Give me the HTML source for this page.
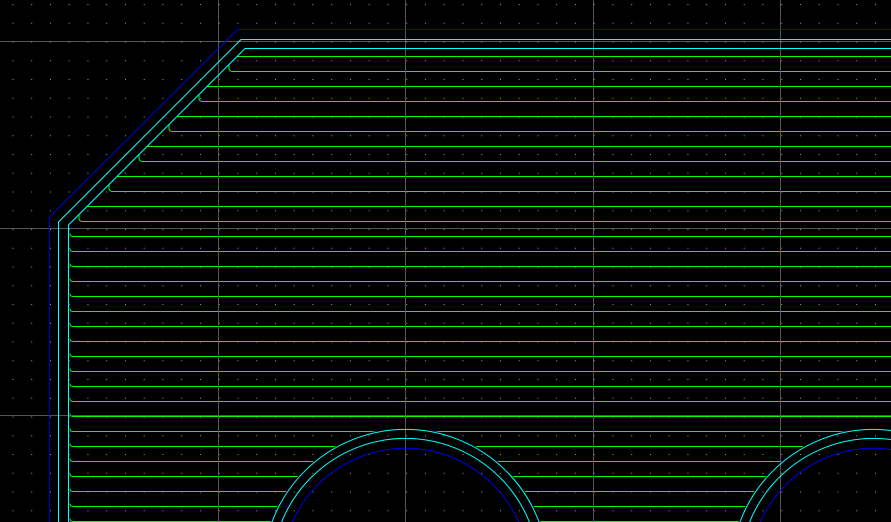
<!DOCTYPE html>
<html><head><meta charset="utf-8"><style>
html,body{margin:0;padding:0;background:#000;overflow:hidden;width:891px;height:522px}
svg{display:block;overflow:hidden}
</style></head><body>
<svg width="891" height="522" viewBox="0 0 891 522" xmlns="http://www.w3.org/2000/svg">
<defs>
<pattern id="dots" x="12.45" y="4" width="18.75" height="18.75" patternUnits="userSpaceOnUse">
<rect x="0" y="0" width="1" height="1" fill="#9a9a9a"/>
</pattern>
<clipPath id="c"><rect width="891" height="522"/></clipPath>
</defs>
<g clip-path="url(#c)">
<rect width="891" height="522" fill="#000"/>
<g stroke="#00ff00" stroke-width="1" fill="none">
<path d="M237,56.5H891"/>
<path d="M229,64.5V68.5Q229,71.5 233,71.5H891"/>
<path d="M207,86.5H891"/>
<path d="M199,94.5V98.5Q199,101.5 203,101.5H891"/>
<path d="M177,116.5H891"/>
<path d="M169,124.5V128.5Q169,131.5 173,131.5H891"/>
<path d="M147,146.5H891"/>
<path d="M139,154.5V158.5Q139,161.5 143,161.5H891"/>
<path d="M117,176.5H891"/>
<path d="M109,184.5V188.5Q109,191.5 113,191.5H891"/>
<path d="M87,206.5H891"/>
<path d="M79,214.5V218.5Q79,221.5 83,221.5H891"/>
<path d="M70,233.5Q70,236.5 73,236.5H891"/>
<path d="M70,248.5Q70,251.5 73,251.5H891"/>
<path d="M70,263.5Q70,266.5 73,266.5H891"/>
<path d="M70,278.5Q70,281.5 73,281.5H891"/>
<path d="M70,293.5Q70,296.5 73,296.5H891"/>
<path d="M70,308.5Q70,311.5 73,311.5H891"/>
<path d="M70,323.5Q70,326.5 73,326.5H891"/>
<path d="M70,338.5Q70,341.5 73,341.5H891"/>
<path d="M70,353.5Q70,356.5 73,356.5H891"/>
<path d="M70,368.5Q70,371.5 73,371.5H891"/>
<path d="M70,383.5Q70,386.5 73,386.5H891"/>
<path d="M70,398.5Q70,401.5 73,401.5H891"/>
<path d="M70,413.5Q70,416.5 73,416.5H891"/>
<path d="M70,428.5Q70,431.5 73,431.5H891"/>
<path d="M70,443.5Q70,446.5 73,446.5H891"/>
<path d="M70,458.5Q70,461.5 73,461.5H891"/>
<path d="M70,473.5Q70,476.5 73,476.5H891"/>
<path d="M70,488.5Q70,491.5 73,491.5H891"/>
<path d="M70,503.5Q70,506.5 73,506.5H891"/>
<path d="M70,518.5Q70,521.5 73,521.5H891"/>
</g>
<circle cx="405.5" cy="572" r="144" fill="#000"/>
<circle cx="873.5" cy="572" r="144" fill="#000"/>
<g stroke="#555" stroke-width="1" fill="none" shape-rendering="crispEdges">
<path d="M218.5,0V522M405.5,0V522M593.5,0V522M780.5,0V522"/>
<path d="M0,41.5H891M0,228.5H891M0,415.5H891"/>
</g>
<rect width="891" height="522" fill="url(#dots)"/>
<g fill="none" stroke-width="1">
<path d="M49.5,522V217L237.5,29.5H891" stroke="#0000d8"/>
<path d="M58.5,522V222L241,39.5H891" stroke="#00ffff"/>
<path d="M68.5,522V225L245,48.5H891" stroke="#00ffff"/>
<circle cx="405.5" cy="572" r="142.6" stroke="#00ffff"/>
<circle cx="405.5" cy="572" r="133.6" stroke="#00ffff"/>
<circle cx="405.5" cy="572" r="123.7" stroke="#0000e0"/>
<circle cx="873.5" cy="572" r="142.6" stroke="#00ffff"/>
<circle cx="873.5" cy="572" r="133.6" stroke="#00ffff"/>
<circle cx="873.5" cy="572" r="123.7" stroke="#0000e0"/>
</g>
</g>
</svg>
</body></html>
